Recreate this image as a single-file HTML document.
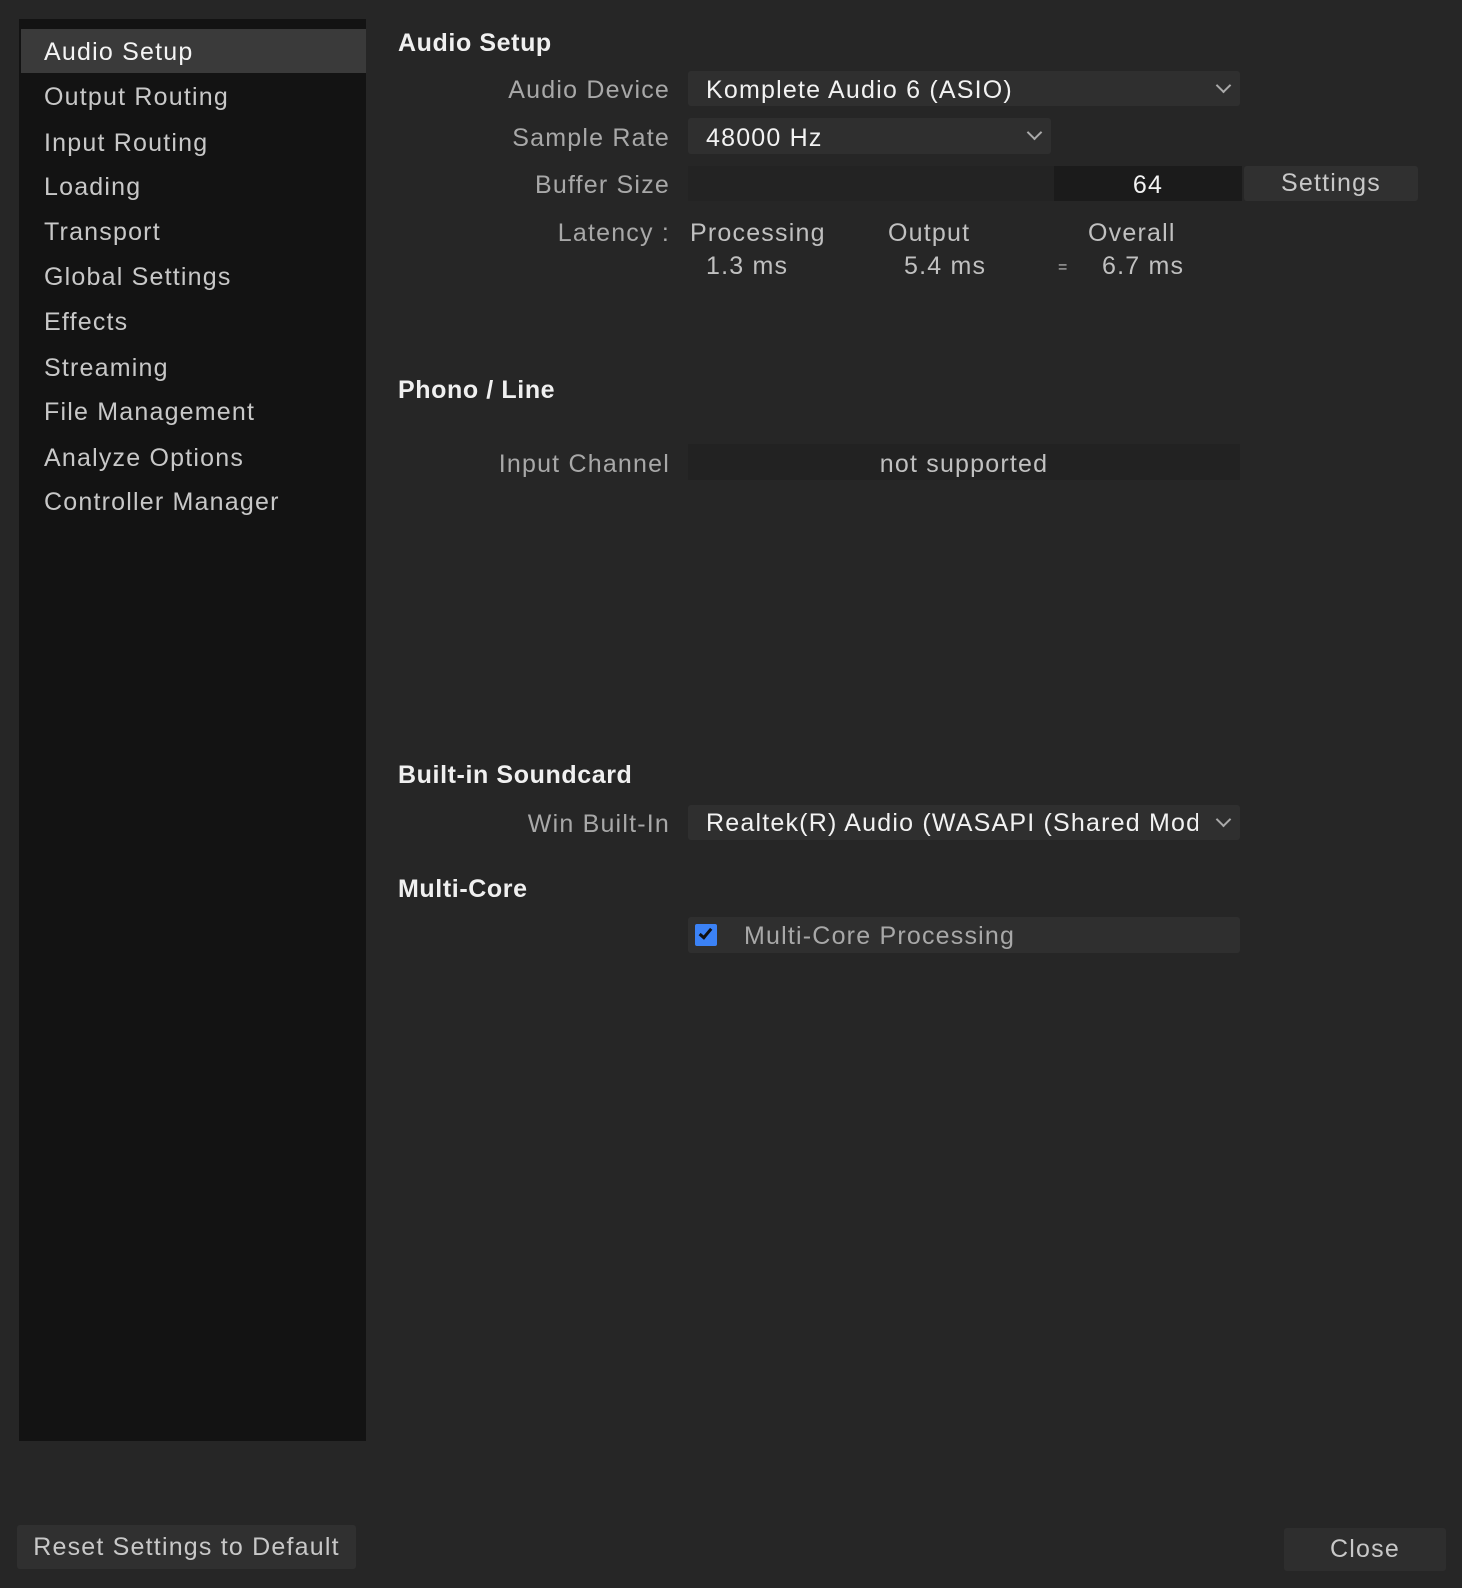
<!DOCTYPE html>
<html><head><meta charset="utf-8"><style>
*{margin:0;padding:0;box-sizing:border-box}
html,body{width:1462px;height:1588px;background:#262626;overflow:hidden;font-family:"Liberation Sans",sans-serif;}
.a{position:absolute;white-space:nowrap}
.t{position:absolute;white-space:nowrap;font-size:25px;letter-spacing:1.2px;line-height:30px;height:30px;transform:translateY(-14px)}
.side{left:19px;top:19px;width:347px;height:1422px;background:#131313}
.sel{left:21px;top:29px;width:345px;height:44px;background:#3a3a3a}
.si{left:44px;color:#c8c8c8}
.h{left:398px;color:#f0f0f0;font-weight:bold;letter-spacing:0.6px}
.lbl{right:792px;color:#a8a8a8;text-align:right}
.box{background:#2f2f2f;border-radius:3px}
.val{color:#f2f2f2}
.lt{color:#c0c0c0}
.chev{position:absolute;width:11px;height:11px;border-right:2px solid #aaa;border-bottom:2px solid #aaa;transform:rotate(45deg)}
.btn{background:#303030;border-radius:3px;color:#c8c8c8;text-align:center;font-size:25px;letter-spacing:1.2px}
</style></head><body>
<div class="a side"></div>
<div class="a sel"></div>
<div class="t si" style="top:51px;color:#f4f4f4">Audio Setup</div>
<div class="t si" style="top:96px">Output Routing</div>
<div class="t si" style="top:142px">Input Routing</div>
<div class="t si" style="top:186px">Loading</div>
<div class="t si" style="top:231px">Transport</div>
<div class="t si" style="top:276px">Global Settings</div>
<div class="t si" style="top:321px">Effects</div>
<div class="t si" style="top:367px">Streaming</div>
<div class="t si" style="top:411px">File Management</div>
<div class="t si" style="top:457px">Analyze Options</div>
<div class="t si" style="top:501px">Controller Manager</div>

<div class="t h" style="top:42px">Audio Setup</div>
<div class="t lbl" style="top:89px">Audio Device</div>
<div class="a box" style="left:688px;top:71px;width:552px;height:35px"></div>
<div class="t val" style="left:706px;top:89px">Komplete Audio 6 (ASIO)</div>
<div class="chev" style="left:1218px;top:80px"></div>

<div class="t lbl" style="top:137px">Sample Rate</div>
<div class="a box" style="left:688px;top:118px;width:363px;height:36px"></div>
<div class="t val" style="left:706px;top:137px">48000 Hz</div>
<div class="chev" style="left:1029px;top:127px"></div>

<div class="t lbl" style="top:184px">Buffer Size</div>
<div class="a" style="left:688px;top:166px;width:366px;height:35px;background:#232323"></div>
<div class="a" style="left:1054px;top:166px;width:188px;height:35px;background:#1b1b1b"></div>
<div class="t val" style="left:1054px;width:188px;text-align:center;top:184px">64</div>
<div class="a btn" style="left:1244px;top:166px;width:174px;height:35px;line-height:35px">Settings</div>

<div class="t lbl" style="top:232px">Latency :</div>
<div class="t lt" style="left:690px;top:232px">Processing</div>
<div class="t lt" style="left:888px;top:232px">Output</div>
<div class="t lt" style="left:1088px;top:232px">Overall</div>
<div class="t lt" style="left:706px;top:265px">1.3 ms</div>
<div class="t lt" style="left:904px;top:265px">5.4 ms</div>
<div class="t lt" style="left:1058px;top:267px;font-size:16px">=</div>
<div class="t lt" style="left:1102px;top:265px">6.7 ms</div>

<div class="t h" style="top:389px">Phono / Line</div>
<div class="t lbl" style="top:463px">Input Channel</div>
<div class="a" style="left:688px;top:444px;width:552px;height:36px;background:#222"></div>
<div class="t lt" style="left:688px;width:552px;text-align:center;top:463px">not supported</div>

<div class="t h" style="top:774px">Built-in Soundcard</div>
<div class="t lbl" style="top:823px">Win Built-In</div>
<div class="a box" style="left:688px;top:805px;width:552px;height:35px"></div>
<div class="a" style="left:706px;top:808px;width:492px;height:30px;overflow:hidden"><div class="t val" style="left:0;top:14px">Realtek(R) Audio (WASAPI (Shared Mode))</div></div>
<div class="chev" style="left:1218px;top:814px"></div>

<div class="t h" style="top:888px">Multi-Core</div>
<div class="a box" style="left:688px;top:917px;width:552px;height:36px"></div>
<div class="a" style="left:695px;top:924px;width:22px;height:22px;background:#3b82f6;border-radius:2px"></div>
<div class="a" style="left:702px;top:926px;width:7px;height:13px;border-right:3px solid #111;border-bottom:3px solid #111;transform:rotate(40deg)"></div>
<div class="t" style="left:744px;top:935px;color:#a8a8a8">Multi-Core Processing</div>

<div class="a btn" style="left:17px;top:1525px;width:339px;height:44px;line-height:44px">Reset Settings to Default</div>
<div class="a btn" style="left:1284px;top:1528px;width:162px;height:43px;line-height:43px;background:#2e2e2e">Close</div>
</body></html>
